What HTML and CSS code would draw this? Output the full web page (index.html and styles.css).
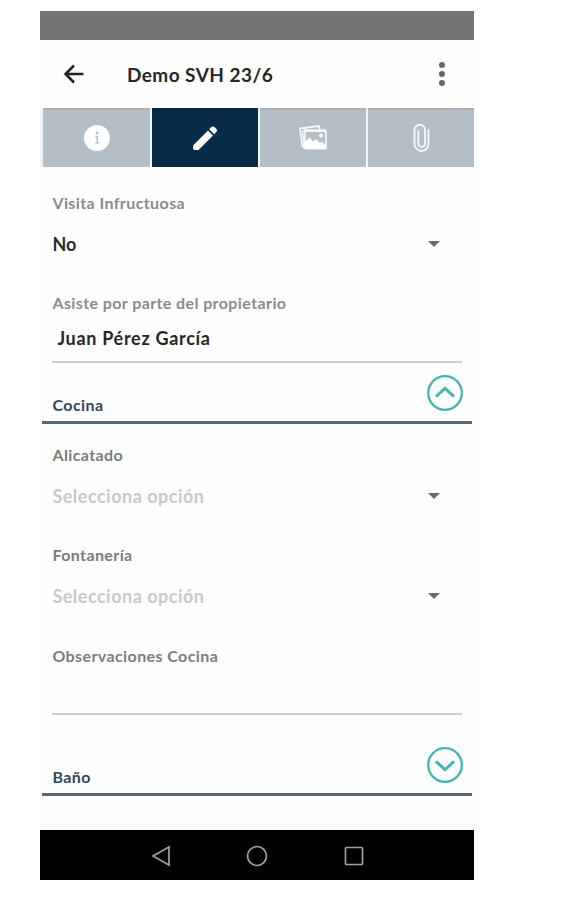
FILE: index.html
```
<!DOCTYPE html>
<html lang="es">
<head>
    <meta charset="UTF-8">
    <meta name="viewport" content="width=device-width, initial-scale=1.0">
    <title>Demo SVH 23/6</title>
    <link rel="stylesheet" href="styles.css">
</head>
<body>
    <div class="phone">
        <div class="status-bar"></div>
        <header class="header">
            <svg class="back" width="22" height="22" viewBox="0 0 22 22">
                <path d="M20.500 11H2.500M11 2.500L2.500 11l8.500 8.500"/>
            </svg>
            <h1>Demo SVH 23/6</h1>
            <svg class="more" width="8" height="26" viewBox="0 0 8 26">
                <circle cx="4" cy="4" r="3"/>
                <circle cx="4" cy="13" r="3"/>
                <circle cx="4" cy="22" r="3"/>
            </svg>
        </header>

        <nav class="tabs">
            <div class="tab">
                <svg width="28" height="28" viewBox="0 0 28 28">
                    <circle cx="14" cy="14" r="13" fill="#fff"/>
                    <circle cx="14" cy="9" r="1.400" fill="#b3bec7"/>
                    <path d="M12.500 12.500H14.300V18.500M12.300 18.800H16" fill="none" stroke="#b3bec7" stroke-width="1.500"/>
                </svg>
            </div>
            <div class="tab active">
                <svg width="28" height="28" viewBox="0 0 28 28">
                    <path d="M2.500 21L17 6.500l5 5L7.500 26H4Q2 26 2 24zM18.200 5.300l2.200-2.200q1.500-1.300 3 0l2 2q1.300 1.500 0 3l-2.200 2.200z" fill="#fff"/>
                </svg>
            </div>
            <div class="tab">
                <svg width="30" height="28" viewBox="0 0 30 28">
                    <path d="M4.500 23L2 4.500l19-2.500.5 3" fill="none" stroke="#f4f6f8" stroke-width="1.800" stroke-linejoin="round"/>
                    <path d="M6.500 22L4.500 8l2-2h20.500v3" fill="none" stroke="#f4f6f8" stroke-width="1.500"/>
                    <rect x="7" y="7" width="21" height="17.500" rx="1" fill="none" stroke="#f4f6f8" stroke-width="1.800"/>
                    <path d="M5 24.500v-4l6.500-7 3.500 4 3-2.500 4 4 2-1.500 4 4v3z" fill="#fff"/>
                    <circle cx="23" cy="11.500" r="2" fill="#fff"/>
                </svg>
            </div>
            <div class="tab">
                <svg width="20" height="30" viewBox="0 0 20 30">
                    <path d="M17.500 7v14a7 7 0 0 1-14 0V7a5.300 5.300 0 0 1 10.600 0v13.500a3.400 3.400 0 0 1-6.800 0V8" fill="none" stroke="#f4f6f8" stroke-width="1.900" stroke-linecap="round"/>
                </svg>
            </div>
        </nav>

        <main class="form">
            <div class="field">
                <div class="label">Visita Infructuosa</div>
                <div class="select">
                    <span>No</span>
                    <i class="caret"></i>
                </div>
            </div>
            <div class="field input-field">
                <div class="label">Asiste por parte del propietario</div>
                <div class="input">Juan Pérez García</div>
            </div>

            <div class="section">
                <h2>Cocina</h2>
                <svg width="38" height="38" viewBox="0 0 38 38">
                    <circle cx="19" cy="19" r="16.800"/>
                    <path d="M10 22.700L19 14.200l9 8.500"/>
                </svg>
            </div>

            <div class="field">
                <div class="label dark">Alicatado</div>
                <div class="select">
                    <span class="placeholder">Selecciona opción</span>
                    <i class="caret"></i>
                </div>
            </div>
            <div class="field">
                <div class="label dark">Fontanería</div>
                <div class="select">
                    <span class="placeholder">Selecciona opción</span>
                    <i class="caret"></i>
                </div>
            </div>
            <div class="field notes">
                <div class="label dark">Observaciones Cocina</div>
                <div class="input"></div>
            </div>

            <div class="section">
                <h2>Baño</h2>
                <svg width="38" height="38" viewBox="0 0 38 38">
                    <circle cx="19" cy="19" r="16.800"/>
                    <path d="M10 15.300L19 23.800l9-8.500"/>
                </svg>
            </div>
        </main>

        <footer class="nav-bar">
            <svg width="22" height="22" viewBox="0 0 22 22">
                <path d="M19 2v18L3 11z"/>
            </svg>
            <svg width="22" height="22" viewBox="0 0 22 22">
                <circle cx="11" cy="11" r="9.500"/>
            </svg>
            <svg width="22" height="22" viewBox="0 0 22 22">
                <rect x="2.500" y="2.500" width="17" height="17" rx="1"/>
            </svg>
        </footer>
    </div>
</body>
</html>
```
FILE: styles.css
```
* {
    box-sizing: border-box;
}

body {
    margin: 0;
    background: #fff;
    font-family: Lato, "Open Sans", sans-serif;
    font-weight: bold;
}

.phone {
    width: 434px;
    margin: 11px 0 0 40.400px;
    background: #fefefe;
}

.status-bar {
    height: 28.500px;
    background: #757575;
}

.header {
    display: flex;
    align-items: center;
    height: 68px;
    padding: 0 28.500px 0 22.500px;
}

.back {
    fill: none;
    stroke: #222;
    stroke-width: 2.500;
}

h1 {
    flex: 1;
    margin: 2px 0 0 42px;
    font-size: 19px;
    line-height: 24px;
    letter-spacing: 0.450px;
    color: #262626;
    white-space: nowrap;
}

.more {
    fill: #666;
}

.tabs {
    display: grid;
    grid-template-columns: repeat(4, 1fr);
    gap: 2px;
    height: 59px;
    padding-left: 3px;
    background: #f1f4f6;
}

.tab {
    display: flex;
    align-items: center;
    justify-content: center;
    border-top: 2px solid #a9afb3;
    background: #b3bec7;
}

.tab.active {
    border-color: #0b2540;
    background: #082b4a;
}

.form {
    height: 663.500px;
    padding-top: 26.500px;
}

.field {
    height: 100.300px;
    padding: 0 12px;
}

.label {
    font-size: 16px;
    line-height: 20px;
    letter-spacing: 0.400px;
    color: #8b8b8b;
    white-space: nowrap;
}

.label.dark {
    color: #7c7c7c;
}

.select {
    display: flex;
    align-items: center;
    justify-content: space-between;
    height: 30px;
    margin-top: 16px;
    padding-right: 22.500px;
    font-size: 18px;
    color: #2b2b2b;
}

.placeholder {
    color: #c8c8cb;
    letter-spacing: 0.500px;
}

.caret {
    border: 6px solid transparent;
    border-top-color: #6b6b6b;
    border-bottom: 0;
}

.input-field {
    height: 70.200px;
}

.input {
    height: 49.500px;
    padding: 13px 5px 0;
    border-bottom: 2px solid #cecece;
    font-size: 18px;
    line-height: 24px;
    letter-spacing: 0.700px;
    color: #262626;
}

.section {
    display: flex;
    align-items: flex-end;
    justify-content: space-between;
    height: 61px;
    margin: 0 2px 20.500px 2px;
    padding: 0 8px 9px 10px;
    border-bottom: 3px solid #5a6a79;
}

.section svg {
    fill: none;
    stroke: #45b5b3;
    stroke-width: 2.300;
}

.section path {
    stroke-width: 3;
}

h2 {
    margin: 0 0 -3px;
    font-size: 16px;
    line-height: 20px;
    letter-spacing: 0.450px;
    color: #2f475c;
}

.notes {
    height: 89px;
}

.notes .input {
    height: 49.500px;
}

.nav-bar {
    display: flex;
    align-items: center;
    justify-content: center;
    gap: 74.500px;
    height: 50px;
    padding-top: 2px;
    background: #000;
}

.nav-bar svg {
    fill: none;
    stroke: #a0a0a0;
    stroke-width: 1.700;
}
```
